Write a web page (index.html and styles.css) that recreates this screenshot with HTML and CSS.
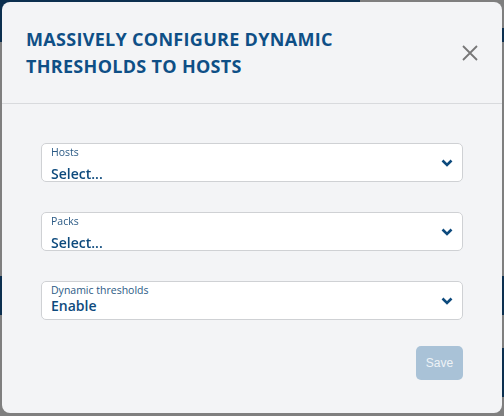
FILE: index.html
```html
<!DOCTYPE html>
<html lang="en">
<head>
    <meta charset="UTF-8">
    <meta name="viewport" content="width=device-width, initial-scale=1.0">
    <title>Dynamic thresholds</title>
    <link rel="stylesheet" href="styles.css">
</head>
<body>
    <div class="backdrop">
        <div class="bg-top">
            <div class="bg-top-left"></div>
            <div class="bg-top-right"><div class="bg-top-band"></div></div>
        </div>
        <div class="bg-gray bg-gap1"></div>
        <div class="bg-navy bg-band1"></div>
        <div class="bg-gray bg-gap2"></div>
        <div class="bg-row">
            <div class="bg-gray bg-fill"></div>
            <div class="bg-navy bg-side"></div>
        </div>
    </div>

    <div class="modal">
        <div class="modal-header">
            <h3 class="modal-title">Massively configure dynamic thresholds to hosts</h3>
            <button class="close-button" aria-label="Close">
                <svg width="16" height="16" viewBox="0 0 16 16">
                    <path d="M1 1 L15 15 M15 1 L1 15" stroke="#777" stroke-width="1.8" fill="none"/>
                </svg>
            </button>
        </div>
        <div class="modal-body">
            <div class="field">
                <div class="field-text">
                    <span class="field-label">Hosts</span>
                    <span class="field-value placeholder">Select...</span>
                </div>
                <svg class="chevron" width="12" height="8" viewBox="0 0 12 8">
                    <path d="M1.5 1.5 L6 6 L10.5 1.5" stroke="#0d4a7d" stroke-width="2.6" fill="none"/>
                </svg>
            </div>
            <div class="field">
                <div class="field-text">
                    <span class="field-label">Packs</span>
                    <span class="field-value placeholder">Select...</span>
                </div>
                <svg class="chevron" width="12" height="8" viewBox="0 0 12 8">
                    <path d="M1.5 1.5 L6 6 L10.5 1.5" stroke="#0d4a7d" stroke-width="2.6" fill="none"/>
                </svg>
            </div>
            <div class="field">
                <div class="field-text">
                    <span class="field-label">Dynamic thresholds</span>
                    <span class="field-value">Enable</span>
                </div>
                <svg class="chevron" width="12" height="8" viewBox="0 0 12 8">
                    <path d="M1.5 1.5 L6 6 L10.5 1.5" stroke="#0d4a7d" stroke-width="2.6" fill="none"/>
                </svg>
            </div>
            <div class="actions">
                <button class="save-button" disabled>Save</button>
            </div>
        </div>
    </div>
</body>
</html>
```

FILE: styles.css
```css
body {
    margin: 0;
    padding: 0;
    font-family: 'Open Sans', sans-serif;
    background-color: #7f7f7f;
    height: 100vh;
    overflow: hidden;
}

/* page behind the dialog */
.backdrop {
    display: flex;
    flex-direction: column;
}

.bg-top {
    display: flex;
    height: 42px;
}

.bg-top-left {
    width: 360px;
    background-color: #0b2f4f;
}

.bg-top-right {
    flex: 1;
    display: flex;
    flex-direction: column;
    justify-content: flex-end;
}

.bg-top-band {
    height: 14px;
    background-color: #0b2f4f;
}

.bg-gray {
    background-color: #7f7f7f;
}

.bg-navy {
    background-color: #0b2f4f;
}

.bg-gap1 {
    height: 234px;
}

.bg-band1 {
    height: 39px;
}

.bg-gap2 {
    height: 33px;
}

.bg-row {
    display: flex;
    height: 49px;
}

.bg-fill {
    flex: 1;
}

.bg-side {
    width: 20px;
}

/* dialog */
.modal {
    position: fixed;
    top: 2px;
    left: 2px;
    width: 500px;
    height: 411px;
    background-color: #f3f4f6;
    border-radius: 8px;
    display: flex;
    flex-direction: column;
}

.modal-header {
    display: flex;
    justify-content: space-between;
    align-items: center;
    height: 102px;
    box-sizing: border-box;
    padding: 0 24px 0 24px;
    border-bottom: 1px solid #d8dadd;
}

.modal-title {
    margin: 0;
    width: 340px;
    color: #0e4f86;
    font-size: 18px;
    font-weight: 700;
    line-height: 27px;
    text-transform: uppercase;
    letter-spacing: 0.3px;
}

.close-button {
    background: none;
    border: none;
    padding: 0;
    cursor: pointer;
    display: flex;
}

.modal-body {
    padding: 39px 39px 0 39px;
    display: flex;
    flex-direction: column;
    gap: 30px;
}

.field {
    display: flex;
    align-items: center;
    justify-content: space-between;
    height: 39px;
    box-sizing: border-box;
    background-color: #fff;
    border: 1px solid #cfd1d4;
    border-radius: 5px;
    padding: 0 9px 0 9px;
}

.field-text {
    display: flex;
    flex-direction: column;
    align-self: flex-start;
    padding-top: 2px;
}

.field-label {
    font-size: 10.5px;
    line-height: 13px;
    color: #2b5a85;
}

.field-value {
    font-size: 14px;
    font-weight: 600;
    line-height: 17px;
    color: #0d4a7d;
}

.field-value.placeholder {
    margin-top: 6px;
}

.chevron {
    margin-top: 1px;
}

.actions {
    display: flex;
    justify-content: flex-end;
    margin-top: -4px;
}

.save-button {
    width: 47px;
    height: 34px;
    border: none;
    border-radius: 5px;
    background-color: #a9c2d7;
    color: #eef2f6;
    font-family: 'Liberation Sans', Arial, sans-serif;
    font-size: 12px;
    padding: 0;
}
```
